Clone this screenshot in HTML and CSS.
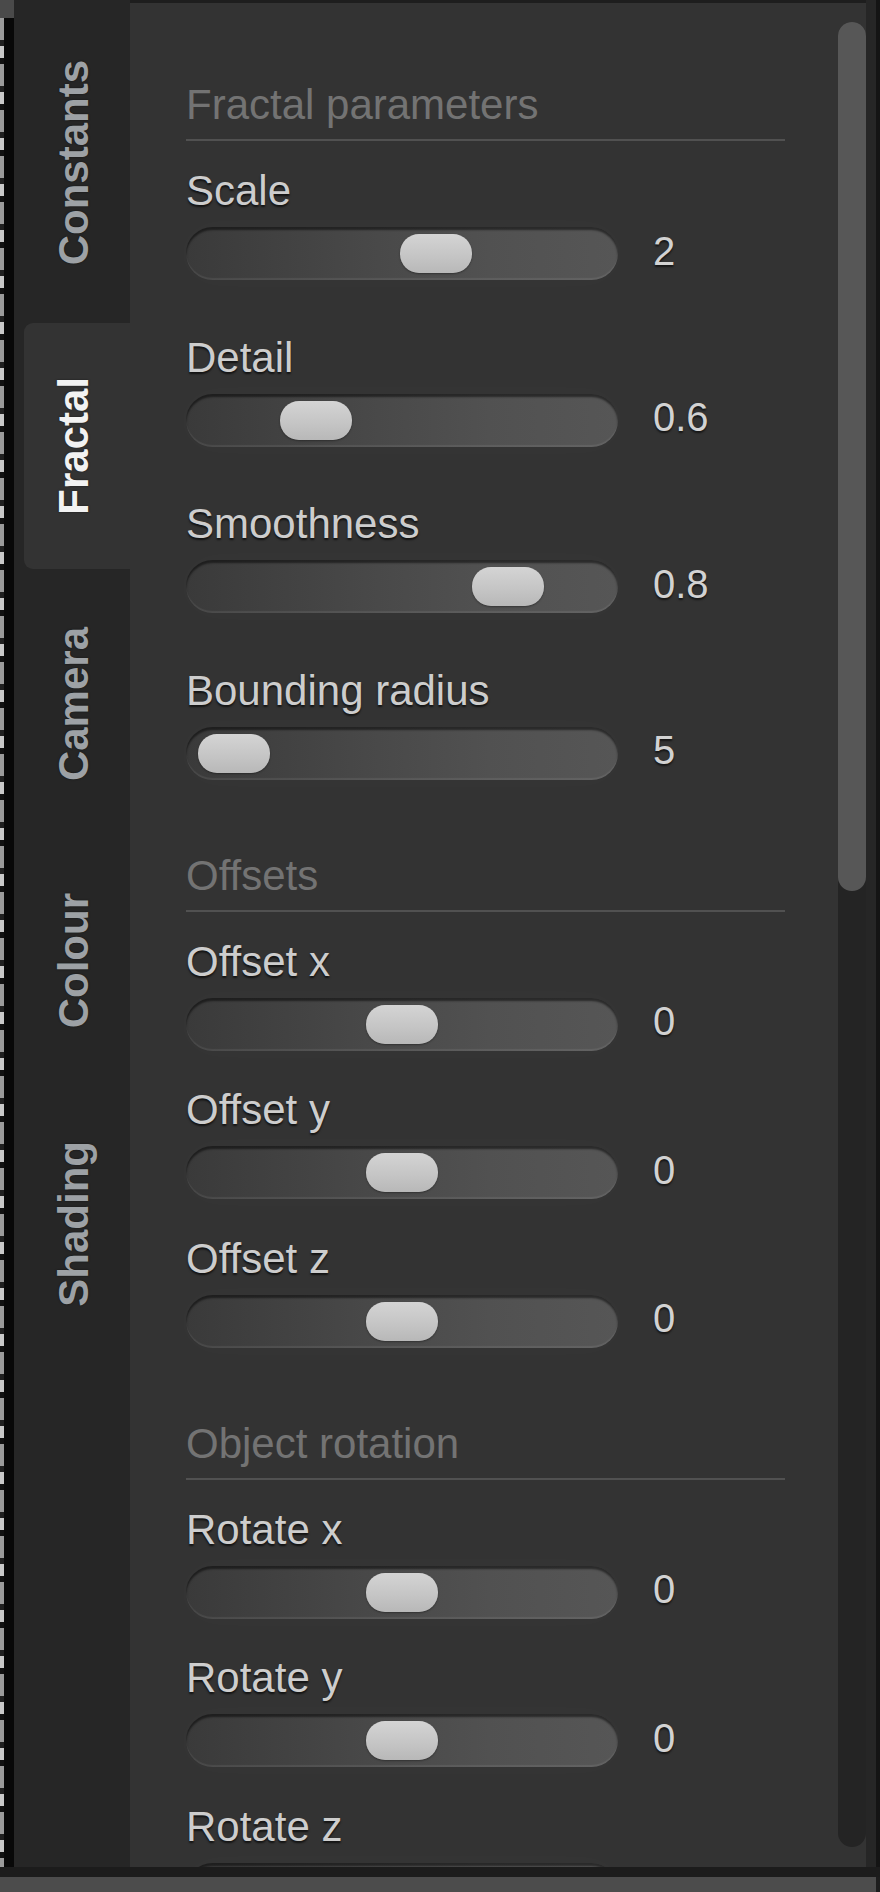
FILE: index.html
```html
<!DOCTYPE html>
<html lang="en">
<head>
<meta charset="utf-8">
<title>Fractal settings</title>
<link rel="stylesheet" href="styles.css">
</head>
<body>
<div class="app">
  <div class="main">
    <div class="edge"><div class="edge-top"></div><div class="edge-marks"></div></div>
    <nav class="tabs">
      <div class="tab"><span>Constants</span></div>
      <div class="tab active"><span>Fractal</span></div>
      <div class="tab"><span>Camera</span></div>
      <div class="tab"><span>Colour</span></div>
      <div class="tab"><span>Shading</span></div>
    </nav>
    <div class="panel">
      <div class="content">
        <section class="group loose">
          <h2 class="heading">Fractal parameters</h2>
          <div class="row"><div class="label">Scale</div><div class="control"><div class="track"><div class="thumb" style="left:214px"></div></div><span class="value">2</span></div></div>
          <div class="row"><div class="label">Detail</div><div class="control"><div class="track"><div class="thumb" style="left:94px"></div></div><span class="value">0.6</span></div></div>
          <div class="row"><div class="label">Smoothness</div><div class="control"><div class="track"><div class="thumb" style="left:286px"></div></div><span class="value">0.8</span></div></div>
          <div class="row"><div class="label">Bounding radius</div><div class="control"><div class="track"><div class="thumb" style="left:12px"></div></div><span class="value">5</span></div></div>
        </section>
        <section class="group">
          <h2 class="heading">Offsets</h2>
          <div class="row"><div class="label">Offset x</div><div class="control"><div class="track"><div class="thumb" style="left:180px"></div></div><span class="value">0</span></div></div>
          <div class="row"><div class="label">Offset y</div><div class="control"><div class="track"><div class="thumb" style="left:180px"></div></div><span class="value">0</span></div></div>
          <div class="row"><div class="label">Offset z</div><div class="control"><div class="track"><div class="thumb" style="left:180px"></div></div><span class="value">0</span></div></div>
        </section>
        <section class="group">
          <h2 class="heading">Object rotation</h2>
          <div class="row"><div class="label">Rotate x</div><div class="control"><div class="track"><div class="thumb" style="left:180px"></div></div><span class="value">0</span></div></div>
          <div class="row"><div class="label">Rotate y</div><div class="control"><div class="track"><div class="thumb" style="left:180px"></div></div><span class="value">0</span></div></div>
          <div class="row"><div class="label">Rotate z</div><div class="control"><div class="track"><div class="thumb" style="left:180px"></div></div></div></div>
        </section>
      </div>
      <div class="scroll"><div class="scroll-track"><div class="scroll-thumb"></div></div></div>
    </div>
    <div class="right-edge"></div>
  </div>
  <div class="bottom-gap"></div>
  <div class="bottom-bar"></div>
</div>
</body>
</html>
```
FILE: styles.css
```css
* { box-sizing: border-box; }

html, body {
  margin: 0;
  padding: 0;
  background: #1e1e1e;
}

body {
  width: 880px;
  height: 1892px;
  overflow: hidden;
  font-family: "Liberation Sans", Arial, sans-serif;
}

.app {
  display: flex;
  flex-direction: column;
  width: 880px;
  height: 1892px;
}

.main {
  display: flex;
  height: 1867px;
}

/* left edge strip */
.edge {
  width: 14px;
  background: #080808;
  display: flex;
  flex-direction: column;
}
.edge-top {
  height: 18px;
  background: #4a4a4a;
}
.edge-marks {
  flex: 1;
  width: 4px;
  background: repeating-linear-gradient(180deg, #9a9a9a 0, #9a9a9a 22px, #202020 22px, #202020 28px, #c8c8c8 28px, #c8c8c8 40px, #111 40px, #111 46px);
}

/* tabs */
.tabs {
  width: 116px;
  background: #262626;
  padding: 6px 0 0 10px;
  display: flex;
  flex-direction: column;
  gap: 4px;
}
.tab {
  display: flex;
  justify-content: center;
  padding: 54px 6px 54px 0;
  border-radius: 9px 0 0 9px;
}
.tab span {
  writing-mode: vertical-rl;
  transform: rotate(180deg);
  font-weight: bold;
  font-size: 42px;
  line-height: 48px;
  color: #9da1a5;
  text-shadow: 0 0 2px rgba(0,0,0,0.6);
}
.tab.active {
  background: #333333;
}
.tab.active span {
  color: #f2f2f2;
}

/* panel */
.panel {
  width: 736px;
  height: 1864px;
  margin-top: 3px;
  background: #333333;
  display: flex;
  overflow: hidden;
}
.content {
  flex: 1;
  padding: 78px 0 0 56px;
}

.group + .group {
  margin-top: 72px;
}

.heading {
  margin: 0;
  width: 599px;
  font-size: 42px;
  line-height: 48px;
  font-weight: normal;
  color: #737373;
  padding-bottom: 10px;
  border-bottom: 2px solid #515151;
}

.row {
  margin-top: 35.5px;
}
.heading + .row {
  margin-top: 26px;
}
.loose .row {
  margin-top: 53.6px;
}
.loose .heading + .row {
  margin-top: 26px;
}

.label {
  font-size: 42px;
  line-height: 48px;
  color: #cdcdcd;
  text-shadow: 0 2px 2px rgba(0,0,0,0.65);
  white-space: nowrap;
}

.control {
  display: flex;
  align-items: center;
  gap: 35px;
  margin-top: 12px;
}

.track {
  position: relative;
  width: 432px;
  height: 53px;
  border-radius: 27px;
  background: linear-gradient(90deg, #3a3a3a 0%, #464646 35%, #515151 70%, #565656 100%);
  box-shadow: inset 0 3px 2px rgba(0,0,0,0.5), inset 0 -2px 1px rgba(255,255,255,0.08), 0 0 30px rgba(255,255,255,0.025);
  flex: none;
}

.thumb {
  position: absolute;
  top: 7px;
  width: 72px;
  height: 39px;
  border-radius: 19px;
  background: linear-gradient(180deg, #d4d4d4 0%, #c4c4c4 60%, #b8b8b8 100%);
  box-shadow: 0 1px 2px rgba(0,0,0,0.35);
}

.value {
  font-size: 40px;
  line-height: 40px;
  padding-bottom: 6px;
  color: #d2d2d2;
  text-shadow: 0 2px 2px rgba(0,0,0,0.6);
}

/* scrollbar */
.scroll {
  width: 28px;
  padding-top: 19px;
  flex: none;
}
.scroll-track {
  height: 1825px;
  border-radius: 14px;
  background: #242424;
}
.scroll-thumb {
  height: 869px;
  border-radius: 14px;
  background: #575757;
}

.right-edge {
  flex: 1;
  background: linear-gradient(90deg, #262626 0, #262626 10px, #141414 10px);
}

.bottom-gap {
  height: 10px;
  background: #1c1c1c;
}
.bottom-bar {
  height: 15px;
  width: 876px;
  background: #4c4c4c;
}
```
